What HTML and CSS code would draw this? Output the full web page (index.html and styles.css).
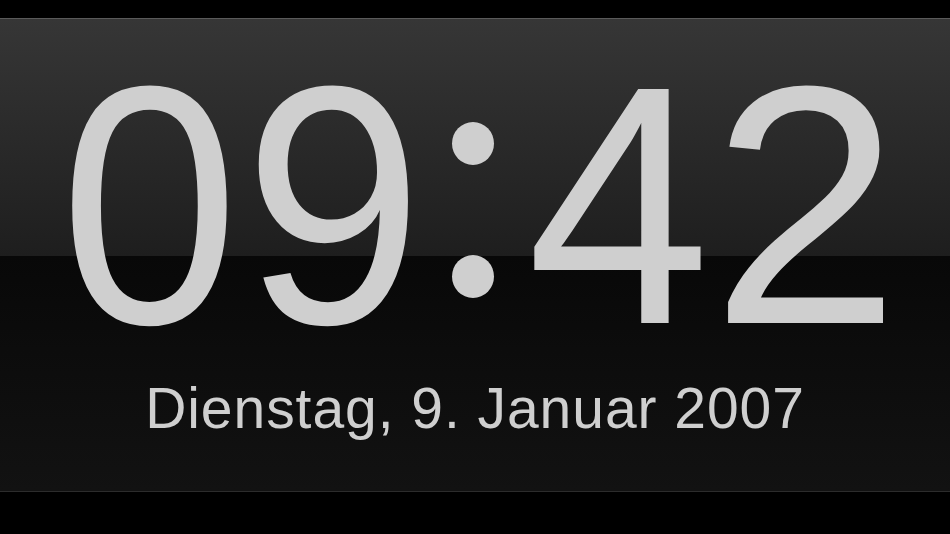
FILE: index.html
```html
<!DOCTYPE html>
<html>
<head>
<meta charset="utf-8">
<link rel="stylesheet" href="styles.css">
</head>
<body>
<div class="screen">
  <div class="panel">
    <div class="time"><span class="d d0">0</span><span class="d d9">9</span><span class="c">:</span><span class="d d4">4</span><span class="d d2">2</span></div>
    <div class="date">Dienstag, 9. Januar 2007</div>
  </div>
</div>
</body>
</html>
```
FILE: styles.css
```css
html, body {
  margin: 0;
  padding: 0;
  background: #000;
}
.screen {
  width: 950px;
  height: 534px;
  padding-top: 18px;
  box-sizing: border-box;
  background: #000;
}
.panel {
  height: 474px;
  box-sizing: border-box;
  border-top: 1px solid #5a5a5a;
  border-bottom: 1px solid #2c2c2c;
  background: linear-gradient(to bottom, #363636 0px, #1e1e1e 237px, #080808 237px, #121212 100%);
  display: flex;
  flex-direction: column;
  align-items: center;
  padding-top: 16px;
  font-family: "Liberation Sans", Arial, sans-serif;
  color: #cfcfcf;
}
.time {
  display: flex;
  font-size: 340px;
  line-height: 340px;
  height: 340px;
}
.d {
  display: block;
  width: 184px;
  text-align: center;
}
.d0, .d9 {
  transform: scaleX(0.95);
}
.d4 {
  margin-left: 5px;
  transform: scaleX(0.97);
}
.d2 {
  margin-left: 3px;
  transform: scaleX(1.0);
}
.c {
  display: block;
  position: relative;
  width: 96px;
  color: transparent;
  text-align: center;
}
.c::before,
.c::after {
  content: "";
  position: absolute;
  left: 29px;
  width: 42px;
  height: 43px;
  border-radius: 50%;
  background: #cfcfcf;
}
.c::before {
  top: 87px;
}
.c::after {
  top: 220px;
}
.date {
  margin-top: 5px;
  font-size: 57px;
  line-height: 57px;
  letter-spacing: 0.95px;
}
```
